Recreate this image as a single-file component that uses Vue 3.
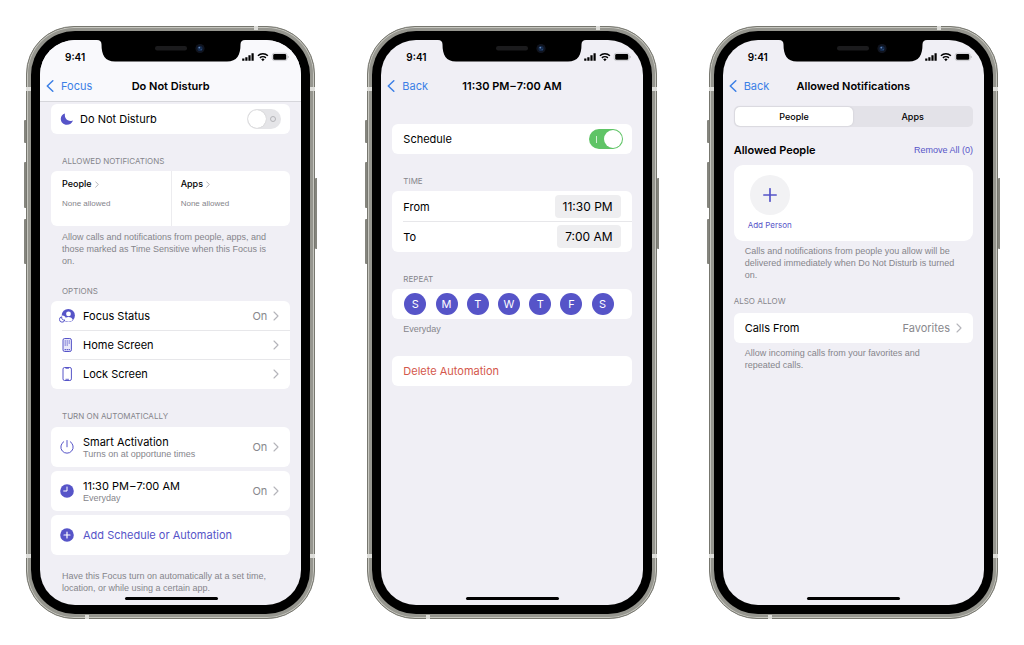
<script setup>
import { ref } from 'vue'

const screens = [
  { id: 'focus', back: 'Focus', title: 'Do Not Disturb' },
  { id: 'schedule', back: 'Back', title: '11:30 PM\u200A–\u200A7:00 AM' },
  { id: 'allowed', back: 'Back', title: 'Allowed Notifications' },
]

const options = [
  { icon: 'person', label: 'Focus Status', value: 'On' },
  { icon: 'home', label: 'Home Screen', value: '' },
  { icon: 'lock', label: 'Lock Screen', value: '' },
]

const automations = [
  { icon: 'power', label: 'Smart Activation', note: 'Turns on at opportune times' },
  { icon: 'clock', label: '11:30 PM\u200A–\u200A7:00 AM', note: 'Everyday' },
]

const days = ref([
  { name: 'Sunday', on: true },
  { name: 'Monday', on: true },
  { name: 'Tuesday', on: true },
  { name: 'Wednesday', on: true },
  { name: 'Thursday', on: true },
  { name: 'Friday', on: true },
  { name: 'Saturday', on: true },
])

const dnd = ref(false)
const scheduled = ref(true)
const tab = ref('People')
</script>

<template>
  <svg class="sprite" aria-hidden="true">
    <symbol id="i-chevron" viewBox="0 0 6 10">
      <path d="M1 1l4 4-4 4" fill="none" stroke="currentColor" stroke-width="1.1" stroke-linecap="round" stroke-linejoin="round" />
    </symbol>
    <symbol id="i-moon" viewBox="0 0 16 16">
      <path d="M5.600 1.600c-.6 4.700 2 8.400 6.600 8.600 1 .1 1.900-.1 2.700-.4-1.200 3-3.800 4.900-7 4.900-4.100 0-7-3-7-6.900 0-2.900 1.800-5.400 4.700-6.200z" fill="currentColor" />
    </symbol>
    <symbol id="i-person" viewBox="0 0 16 16">
      <circle cx="9.300" cy="7.500" r="6.600" fill="currentColor" />
      <circle cx="9.500" cy="5.900" r="2.400" fill="#fff" />
      <path d="M5.200 12c.5-2 2.200-3 4.300-3s3.800 1 4.300 3c-1.200 1.100-2.700 1.700-4.300 1.700s-3.100-.6-4.300-1.700z" fill="#fff" />
      <circle cx="3.200" cy="11.300" r="3.700" fill="#fff" />
      <path d="M2.700 8.800a2.700 2.700 0 1 0 3.100 3.200c-1.900.5-3.500-1-3.100-3.200z" fill="#fff" stroke="currentColor" stroke-width="1" stroke-linejoin="round" />
    </symbol>
    <symbol id="i-home" viewBox="0 0 16 16">
      <rect x="4" y="1.500" width="8.400" height="13" rx="1.600" fill="#e9e8fa" stroke="currentColor" stroke-width="1" />
      <path d="M5.600 4h1.300M7.600 4h1.300M9.600 4h1.300M5.600 6h1.300M7.600 6h1.300M9.600 6h1.300M5.600 8h1.300M7.600 8h1.300M5.600 12.600h1.300M7.600 12.600h1.300M9.600 12.600h1.300" stroke="currentColor" stroke-width="1.100" />
    </symbol>
    <symbol id="i-lock" viewBox="0 0 16 16">
      <rect x="4" y="1.500" width="8.400" height="13" rx="1.600" fill="#fff" stroke="currentColor" stroke-width="1" />
      <path d="M6.500 2.300h3.400M6.500 13.300h3.400" stroke="currentColor" stroke-width=".9" />
    </symbol>
    <symbol id="i-power" viewBox="0 0 16 16">
      <path d="M8 1.500v6.300M4.700 2.700a6.200 6.200 0 1 0 6.600 0" fill="none" stroke="currentColor" stroke-width="1" stroke-linecap="round" />
    </symbol>
    <symbol id="i-clock" viewBox="0 0 16 16">
      <circle cx="8" cy="8" r="6.800" fill="currentColor" />
      <path d="M8 4v4H4.700" fill="none" stroke="#fff" stroke-width="1" stroke-linecap="round" stroke-linejoin="round" />
    </symbol>
    <symbol id="i-add" viewBox="0 0 16 16">
      <circle cx="8" cy="8" r="6.800" fill="currentColor" />
      <path d="M8 5v6M5 8h6" stroke="#fff" stroke-width="1.200" stroke-linecap="round" />
    </symbol>
  </svg>

  <main class="stage">
    <article v-for="s in screens" :key="s.id" class="phone" :class="s.id">
      <i class="key mute"></i>
      <i class="key up"></i>
      <i class="key down"></i>
      <i class="key side"></i>
      <i class="band band-top"></i>
      <i class="band band-bottom"></i>
      <i class="band band-row high"></i>
      <i class="band band-row low"></i>
      <div class="bezel">
        <div class="screen">
          <header class="top">
            <div class="status">
              <time>9:41</time>
              <svg width="47" height="10" viewBox="0 0 47 10" role="img" aria-label="Signal, Wi-Fi, battery">
                <path d="M.2 6.500h2.200v2.300H.2zM3.300 5.300h2.200v3.500H3.300zM6.400 3.300h2.200v5.500H6.400zM9.500 1.200h2.200v7.600H9.500z" />
                <path d="M15.900 3.700a7.300 7.300 0 0 1 10 0M17.900 5.900a4.400 4.400 0 0 1 6 0" fill="none" stroke="#000" stroke-width="1.500" />
                <path d="M19.200 7.300a2.600 2.600 0 0 1 3.400 0L20.900 9.200z" />
                <rect x="30.200" y="1.200" width="15" height="7.400" rx="2.200" fill="#f4f4f6" stroke="#b4b4b9" stroke-width=".6" />
                <rect x="31.200" y="2.100" width="13" height="5.600" rx="1.300" />
                <path d="M45.900 3.700c.9.300.9 2.100 0 2.400z" fill="#999" />
              </svg>
            </div>
            <nav class="nav">
              <a href="#" class="back">
                <svg width="8" height="12" viewBox="0 0 8 12" aria-hidden="true"><path d="M6.800.8L1.300 6l5.500 5.200" fill="none" stroke="currentColor" stroke-width="1.500" stroke-linecap="round" stroke-linejoin="round" /></svg>
                {{ s.back }}
              </a>
              <h1>{{ s.title }}</h1>
            </nav>
          </header>

          <div v-if="s.id === 'focus'" class="body">
            <div class="card">
              <label class="row toggle-row">
                <svg class="icon" width="14" height="14"><use href="#i-moon" /></svg>
                <span class="name">Do Not Disturb</span>
                <input v-model="dnd" type="checkbox" role="switch" class="switch" />
              </label>
            </div>
            <h2>ALLOWED NOTIFICATIONS</h2>
            <div class="card split">
              <button v-for="n in ['People', 'Apps']" :key="n" type="button">
                <strong>{{ n }}<svg width="4" height="7"><use href="#i-chevron" /></svg></strong>
                <small>None allowed</small>
              </button>
            </div>
            <p>Allow calls and notifications from people, apps, and those marked as Time Sensitive when this Focus is on.</p>
            <h2 class="options-title">OPTIONS</h2>
            <div class="card">
              <button v-for="o in options" :key="o.label" type="button" class="row">
                <svg class="icon" width="16" height="16"><use :href="'#i-' + o.icon" /></svg>
                <span class="name">{{ o.label }}</span>
                <span class="value">{{ o.value }}</span>
                <svg class="chev" width="6" height="10"><use href="#i-chevron" /></svg>
              </button>
            </div>
            <h2 class="auto-title">TURN ON AUTOMATICALLY</h2>
            <div class="stack">
              <button v-for="a in automations" :key="a.label" type="button" class="card row tall">
                <svg class="icon" width="16" height="16"><use :href="'#i-' + a.icon" /></svg>
                <span class="name">{{ a.label }}<small>{{ a.note }}</small></span>
                <span class="value">On</span>
                <svg class="chev" width="6" height="10"><use href="#i-chevron" /></svg>
              </button>
              <button type="button" class="card row tall add">
                <svg class="icon" width="16" height="16"><use href="#i-add" /></svg>
                <span class="name">Add Schedule or Automation</span>
              </button>
            </div>
            <p class="foot">Have this Focus turn on automatically at a set time, location, or while using a certain app.</p>
          </div>

          <div v-else-if="s.id === 'schedule'" class="body">
            <div class="card">
              <label class="row">
                <span class="name">Schedule</span>
                <input v-model="scheduled" type="checkbox" role="switch" class="switch" />
              </label>
            </div>
            <h2>TIME</h2>
            <div class="card times">
              <div class="row">
                <span id="from" class="name">From</span>
                <button type="button" class="pill" aria-describedby="from">11:30 PM</button>
              </div>
              <div class="row">
                <span id="to" class="name">To</span>
                <button type="button" class="pill" aria-describedby="to">7:00 AM</button>
              </div>
            </div>
            <h2>REPEAT</h2>
            <div class="card days">
              <button v-for="d in days" :key="d.name" type="button" :aria-label="d.name" :aria-pressed="d.on" @click="d.on = !d.on">{{ d.name[0] }}</button>
            </div>
            <p class="repeat-note">Everyday</p>
            <div class="card delete">
              <button type="button" class="row">Delete Automation</button>
            </div>
          </div>

          <div v-else class="body">
            <div class="segments" role="radiogroup" aria-label="Notification source">
              <label v-for="t in ['People', 'Apps']" :key="t" :class="{ on: tab === t }">
                <input v-model="tab" type="radio" name="source" :value="t" />{{ t }}
              </label>
            </div>
            <div class="heading">
              <h3>Allowed People</h3>
              <button type="button">Remove All (0)</button>
            </div>
            <div class="card people">
              <button type="button">
                <span class="plus"><svg width="14" height="14" viewBox="0 0 14 14" aria-hidden="true"><path d="M7 .8v12.400M.8 7h12.400" stroke="currentColor" stroke-width="1.700" stroke-linecap="round" /></svg></span>
                Add Person
              </button>
            </div>
            <p>Calls and notifications from people you allow will be delivered immediately when Do Not Disturb is turned on.</p>
            <h2>ALSO ALLOW</h2>
            <div class="card">
              <button type="button" class="row">
                <span class="name">Calls From</span>
                <span class="value">Favorites</span>
                <svg class="chev" width="6" height="10"><use href="#i-chevron" /></svg>
              </button>
            </div>
            <p class="calls-note">Allow incoming calls from your favorites and repeated calls.</p>
          </div>

          <i class="home-bar"></i>
        </div>
        <svg class="notch" width="148" height="22" viewBox="0 0 148 22" aria-hidden="true">
          <path d="M0 0h148c-3 0-4.500 1.500-4.500 4.500C143.500 15 140 21.500 130 21.500H18C8 21.500 4.500 15 4.500 4.500 4.500 1.500 3 0 0 0z" />
          <rect x="58" y="6" width="32" height="4.500" rx="2.200" fill="#1b1b1d" />
          <circle cx="103" cy="8.500" r="4.600" fill="#10141f" />
          <circle cx="103" cy="8.500" r="2.600" fill="#142a4c" />
          <circle cx="102.300" cy="7.600" r=".9" fill="#6285b8" />
          <circle cx="104.200" cy="9.600" r=".7" fill="#33527f" />
        </svg>
      </div>
    </article>
  </main>
</template>

<style>
body {
  margin: 0;
  background: #fff;
}
</style>

<style scoped>
* {
  box-sizing: border-box;
}
.sprite {
  position: absolute;
  width: 0;
  height: 0;
}
.stage {
  display: grid;
  grid-template-columns: repeat(3, minmax(0, 1fr));
  gap: 52px;
  padding: 26px;
  font-family: Inter, "Liberation Sans", sans-serif;
  color: #000;
}
button,
input {
  margin: 0;
  padding: 0;
  border: 0;
  background: none;
  color: inherit;
  font: inherit;
  text-align: left;
}
svg {
  display: block;
  flex: none;
}

/* Device shell */
.phone {
  position: relative;
  aspect-ratio: 289 / 592;
  padding: 4px;
  border: 1px solid #77776f;
  border-radius: 48px;
  background: #96968f;
  box-shadow: inset 0 0 0 1px #c6c6bf;
}
.bezel {
  position: relative;
  height: 100%;
  padding: 9px;
  border-radius: 44px;
  background: #000;
}
.screen {
  position: relative;
  height: 100%;
  overflow: hidden;
  border-radius: 35px;
  background: #f0eff5;
}
.notch {
  position: absolute;
  top: 9px;
  left: 50%;
  transform: translateX(-50%);
}
.key {
  position: absolute;
  left: -3px;
  width: 2px;
  border-radius: 1px 0 0 1px;
  background: #85857e;
}
.mute { top: 93px; height: 23px; }
.up { top: 135px; height: 46px; }
.down { top: 192px; height: 45px; }
.side {
  top: 151px;
  right: -3px;
  left: auto;
  height: 71px;
}
.band {
  position: absolute;
  background: #dededa;
}
.band-top { top: -1px; right: 56px; width: 4px; height: 4px; }
.band-bottom { bottom: -1px; left: 58px; width: 4px; height: 4px; }
.band-row {
  right: -1px;
  left: -1px;
  height: 4px;
}
.high { top: 60px; }
.low { bottom: 60px; }
.home-bar {
  position: absolute;
  bottom: 5px;
  left: 50%;
  width: 93px;
  height: 3px;
  margin-left: -46px;
  border-radius: 2px;
  background: #000;
}

/* Status and navigation */
.status {
  display: flex;
  align-items: center;
  justify-content: space-between;
  height: 34px;
  padding: 0 12px 0 25px;
  font-size: 10px;
  font-weight: 600;
}
.nav {
  display: grid;
  grid-template-columns: 1fr auto 1fr;
  align-items: center;
  height: 24px;
  padding: 0 6px;
}
.back {
  display: flex;
  align-items: center;
  gap: 7px;
  color: #3b7fe6;
  font-size: 11px;
  text-decoration: none;
}
h1 {
  margin: 0;
  font-size: 11px;
  font-weight: 600;
  line-height: 16px;
}
.focus .top {
  height: 62px;
  border-bottom: 1px solid #d6d6db;
  background: #f9f9fc;
}

/* Grouped lists */
.body {
  padding: 0 11px;
}
.focus .body { padding-top: 2px; }
.schedule .body { padding-top: 26px; }
.allowed .body { padding-top: 8px; }
.card {
  padding: 1px 0;
  border-radius: 6px;
  background: #fff;
}
.row {
  position: relative;
  display: flex;
  align-items: center;
  width: 100%;
  min-height: 28px;
  padding: 0 11px;
  font-size: 11px;
  line-height: 14px;
}
.row + .row:not(.tall) {
  margin-top: 1px;
}
.row + .row:not(.tall)::before {
  content: "";
  position: absolute;
  top: -1px;
  right: 0;
  left: 11px;
  height: 1px;
  background: #e7e7ea;
}
.name {
  flex: 1;
}
.value {
  color: #88888d;
}
.icon {
  width: 16px;
  margin-right: 8px;
  margin-left: -3px;
  color: #5654c8;
}
.toggle-row .icon {
  margin-right: 5px;
}
.chev {
  margin-left: 6px;
  color: #b4b4ba;
}
.tall {
  min-height: 40px;
}
small,
p,
.heading button {
  font-family: "Liberation Sans", Arial, sans-serif;
}
small,
p {
  color: #85858b;
  font-size: 9px;
}
.tall small {
  display: block;
  line-height: 10px;
}
.add {
  color: #5654c8;
}
.stack {
  display: grid;
  gap: 4px;
}
h2 {
  margin: 21px 11px 4px;
  color: #85858b;
  font-size: 8px;
  font-weight: 400;
  line-height: 12px;
}
.focus .auto-title { margin-bottom: 5px; }
p {
  margin: 5px 0 0;
  padding: 0 16px 0 11px;
  line-height: 12px;
}
.focus .options-title { margin-top: 18px; }
.foot { margin-top: 15px; }
.calls-note { padding-right: 24px; }
.repeat-note { margin-top: 4px; }
.allowed p { margin-top: 4px; }
.split {
  display: grid;
  grid-template-columns: 1fr 1fr;
  min-height: 55px;
  padding: 0;
}
.split button {
  display: flex;
  flex-direction: column;
  gap: 8px;
  padding: 7px 11px;
}
.split button + button {
  padding-left: 9px;
  border-left: 1px solid #ececef;
}
.split strong {
  display: flex;
  align-items: center;
  gap: 3px;
  font-size: 9px;
  font-weight: 500;
  line-height: 12px;
}
.split svg { color: #99999f; }
.split small {
  font-size: 8px;
  line-height: 12px;
}

/* Switches */
.switch {
  position: relative;
  width: 34px;
  height: 20px;
  margin-right: -2px;
  border-radius: 10px;
  background: #e5e5e8;
  appearance: none;
}
.switch::before {
  content: "";
  position: absolute;
  top: 1px;
  left: 1px;
  width: 18px;
  height: 18px;
  border-radius: 50%;
  background: #fff;
  box-shadow: 0 0 1px #aaa;
}
.switch::after {
  content: "";
  position: absolute;
  top: 7px;
  right: 5px;
  width: 4px;
  height: 4px;
  border: 1px solid #b4b4b8;
  border-radius: 50%;
}
.switch:checked {
  background: #5fc466;
}
.switch:checked::before {
  left: 15px;
  box-shadow: none;
}
.switch:checked::after {
  right: auto;
  left: 7px;
  width: 1px;
  height: 7px;
  border: 0;
  border-radius: 0;
  background: #d2f0d4;
}

/* Schedule */
.times .row { min-height: 29px; }
.pill {
  height: 23px;
  padding: 0 8px;
  border-radius: 4px;
  background: #eeeef0;
  font-size: 12px;
}
.days {
  display: flex;
  justify-content: space-between;
  align-items: center;
  min-height: 30px;
  padding: 0 18px 0 12px;
}
.days button {
  width: 22px;
  height: 22px;
  border-radius: 50%;
  background: #e5e5ea;
  color: #5654c8;
  font-size: 11px;
  line-height: 22px;
  text-align: center;
}
.days button[aria-pressed="true"] {
  background: #5654c8;
  color: #fff;
}
.delete {
  margin-top: 21px;
  color: #d4584c;
}

/* Allowed notifications */
.segments {
  display: grid;
  grid-template-columns: 1fr 1fr;
  padding: 1px;
  border-radius: 5px;
  background: #e3e2e8;
}
.segments label {
  border-radius: 5px;
  font-size: 9px;
  font-weight: 500;
  line-height: 19px;
  text-align: center;
}
.segments .on {
  background: #fff;
  box-shadow: 0 0 2px #c4c4ca;
}
.segments input {
  position: absolute;
  opacity: 0;
}
.heading {
  display: flex;
  align-items: center;
  justify-content: space-between;
  margin: 15px 0 7px;
  color: #5654c8;
  font-size: 9px;
  line-height: 16px;
}
h3 {
  margin: 0;
  color: #000;
  font-size: 11px;
  font-weight: 600;
}
.people {
  min-height: 76px;
  padding: 10px 14px;
  border-radius: 9px;
}
.people button {
  display: flex;
  flex-direction: column;
  align-items: center;
  gap: 4px;
  color: #5654c8;
  font-size: 8px;
  line-height: 12px;
}
.plus {
  display: grid;
  place-items: center;
  width: 40px;
  height: 40px;
  border-radius: 50%;
  background: #f2f2f4;
}
.allowed h2 { margin: 14px 0 6px; }
</style>
